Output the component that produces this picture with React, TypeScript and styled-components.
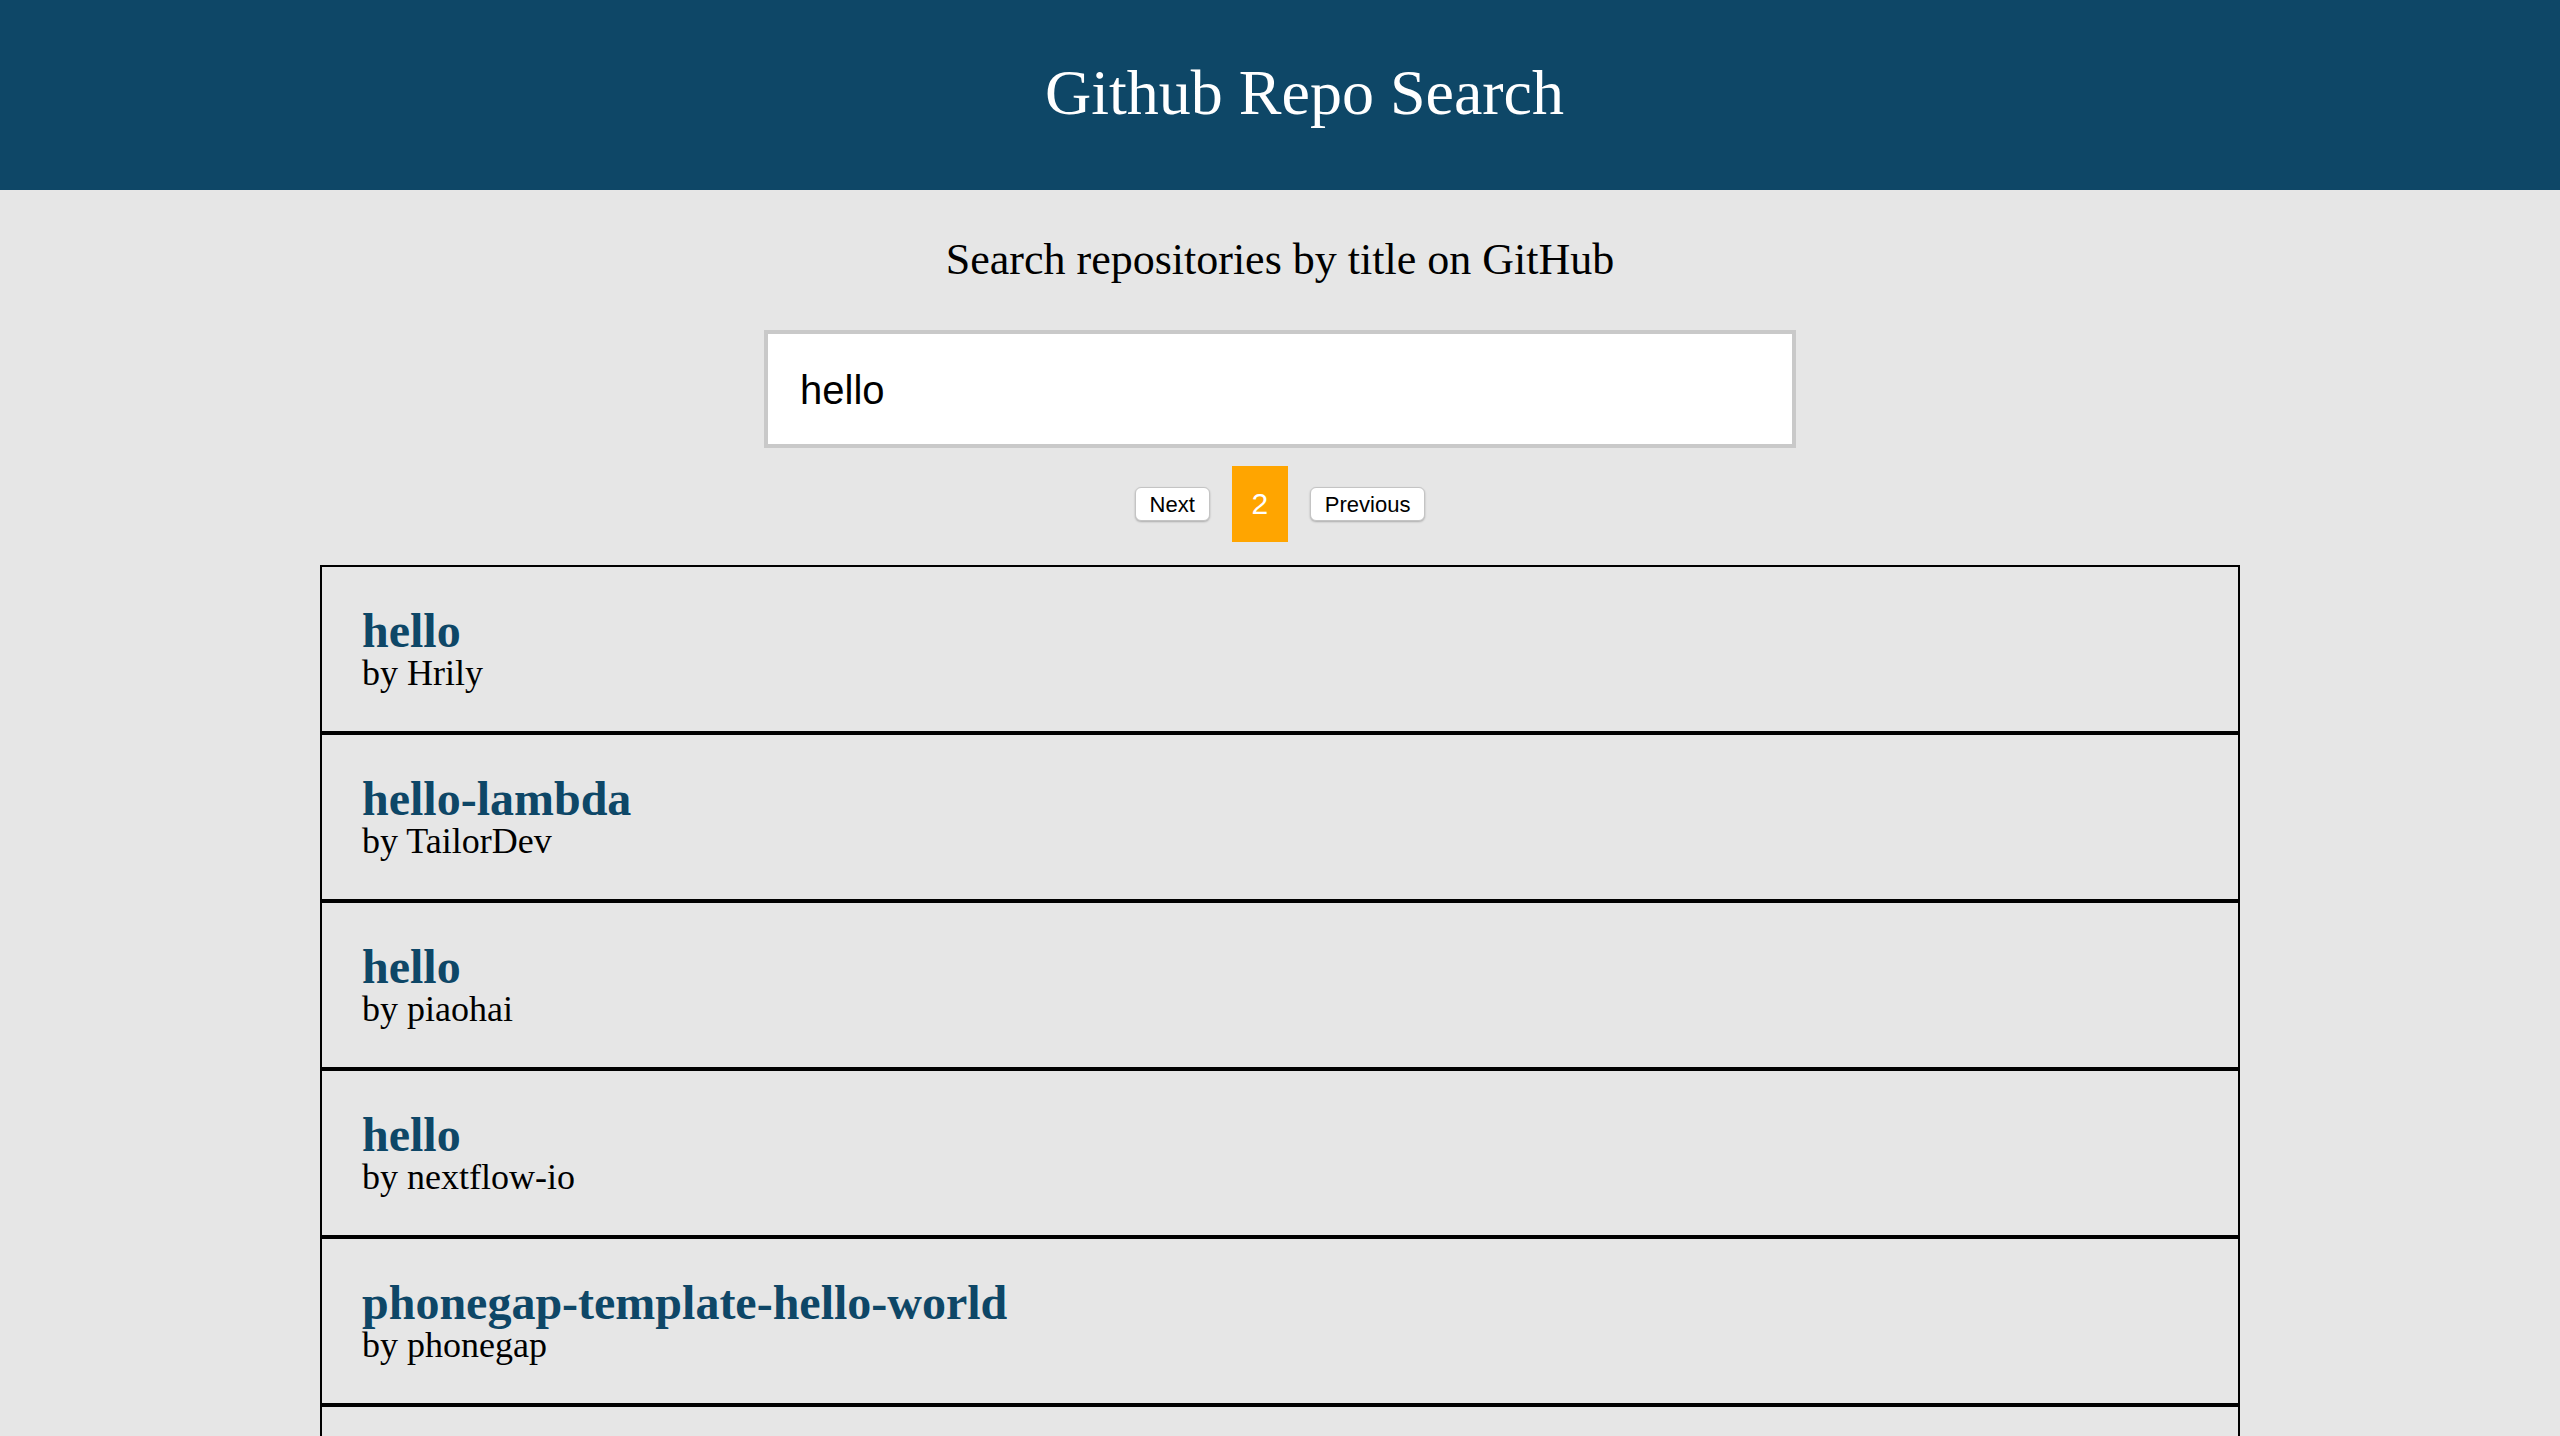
import React from "react";
import styled, { createGlobalStyle } from "styled-components";

const GlobalStyle = createGlobalStyle`
  html, body {
    margin: 0;
    padding: 0;
    background: #e6e6e6;
  }
  body {
    font-family: "Liberation Serif", "Times New Roman", serif;
  }
  * { box-sizing: border-box; }
`;

const Header = styled.header`
  height: 190px;
  background: #0e4767;
  display: flex;
  align-items: center;
  justify-content: center;
  padding-left: 49px;
`;

const Title = styled.h1`
  margin: 0;
  color: #ffffff;
  font-family: "Liberation Serif", "Times New Roman", serif;
  font-weight: normal;
  font-size: 64px;
  padding-bottom: 4px;
`;

const Main = styled.main`
  display: flex;
  flex-direction: column;
  align-items: center;
`;

const Subtitle = styled.p`
  margin: 46px 0 0;
  font-size: 44px;
  color: #000;
  line-height: 48.7px;
`;

const SearchInput = styled.input`
  margin-top: 45px;
  width: 1032px;
  height: 118px;
  border: 4px solid #c9c9c9;
  background: #ffffff;
  padding: 3px 32px 0;
  font-family: "Liberation Sans", Arial, sans-serif;
  font-size: 40px;
  color: #000;
  outline: none;
`;

const Pager = styled.div`
  margin-top: 18px;
  display: flex;
  align-items: center;
  gap: 22px;
`;

const PageButton = styled.button`
  height: 34px;
  padding: 3px 14px 0;
  background: #ffffff;
  border: 1px solid #c4c4c4;
  border-radius: 6px;
  box-shadow: 0 1px 2px rgba(0, 0, 0, 0.25);
  font-family: "Liberation Sans", Arial, sans-serif;
  font-size: 22px;
  color: #000;
  line-height: 1;
  cursor: pointer;
`;

const CurrentPage = styled.span`
  width: 56px;
  height: 76px;
  background: #ffa500;
  color: #ffffff;
  display: flex;
  align-items: center;
  justify-content: center;
  font-family: "Liberation Sans", Arial, sans-serif;
  font-size: 30px;
`;

const RepoList = styled.ul`
  list-style: none;
  margin: 23px 0 0;
  padding: 0;
  width: 1920px;
`;

const RepoItem = styled.li`
  border: 2px solid #000;
  padding: 40px;
`;

const RepoName = styled.a`
  display: block;
  color: #0e4767;
  font-weight: bold;
  font-size: 48px;
  line-height: 48px;
  text-decoration: none;
`;

const RepoOwner = styled.div`
  font-size: 36px;
  line-height: 36px;
  color: #000;
`;

const repos = [
  { name: "hello", owner: "Hrily" },
  { name: "hello-lambda", owner: "TailorDev" },
  { name: "hello", owner: "piaohai" },
  { name: "hello", owner: "nextflow-io" },
  { name: "phonegap-template-hello-world", owner: "phonegap" },
  { name: "hello-world", owner: "octocat" },
];

export default function App() {
  return (
    <>
      <GlobalStyle />
      <Header>
        <Title>Github Repo Search</Title>
      </Header>
      <Main>
        <Subtitle>Search repositories by title on GitHub</Subtitle>
        <SearchInput type="text" defaultValue="hello" />
        <Pager>
          <PageButton>Next</PageButton>
          <CurrentPage>2</CurrentPage>
          <PageButton>Previous</PageButton>
        </Pager>
        <RepoList>
          {repos.map((r, i) => (
            <RepoItem key={i}>
              <RepoName href="#">{r.name}</RepoName>
              <RepoOwner>by {r.owner}</RepoOwner>
            </RepoItem>
          ))}
        </RepoList>
      </Main>
    </>
  );
}
